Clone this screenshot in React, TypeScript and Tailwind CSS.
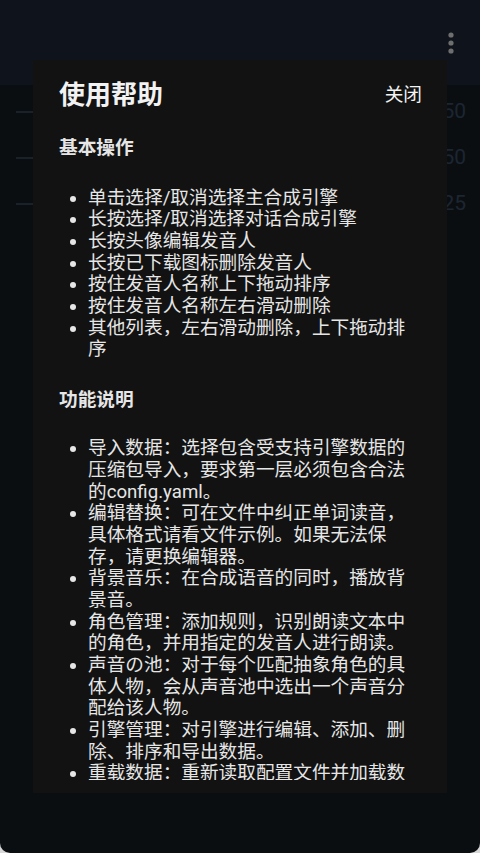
import React from "react";

const basicOps = [
  "单击选择/取消选择主合成引擎",
  "长按选择/取消选择对话合成引擎",
  "长按头像编辑发音人",
  "长按已下载图标删除发音人",
  "按住发音人名称上下拖动排序",
  "按住发音人名称左右滑动删除",
  "其他列表，左右滑动删除，上下拖动排序",
];

const features = [
  "导入数据：选择包含受支持引擎数据的压缩包导入，要求第一层必须包含合法的config.yaml。",
  "编辑替换：可在文件中纠正单词读音，具体格式请看文件示例。如果无法保存，请更换编辑器。",
  "背景音乐：在合成语音的同时，播放背景音。",
  "角色管理：添加规则，识别朗读文本中的角色，并用指定的发音人进行朗读。",
  "声音の池：对于每个匹配抽象角色的具体人物，会从声音池中选出一个声音分配给该人物。",
  "引擎管理：对引擎进行编辑、添加、删除、排序和导出数据。",
  "重载数据：重新读取配置文件并加载数据。",
];

const bgRows = ["150", "150", "125"];

const font = { fontFamily: 'Roboto, "Noto Sans CJK SC", sans-serif' };

const MoreIcon = () => (
  <svg width="6" height="22" viewBox="0 0 6 22" fill="#6e6e6e">
    <circle cx="3" cy="3" r="2.6" />
    <circle cx="3" cy="11" r="2.6" />
    <circle cx="3" cy="19" r="2.6" />
  </svg>
);

const BulletList = ({ items }: { items: string[] }) => (
  <ul className="list-disc pl-[29px] text-[18.67px] leading-[21.67px] text-[#e6e6e6]">
    {items.map((item, index) => (
      <li key={index}>{item}</li>
    ))}
  </ul>
);

export default function App() {
  return (
    <div className="h-[853px] w-[480px] bg-[#d8d8d8]" style={font}>
      <div className="relative h-full w-full overflow-hidden rounded-b-[10px] bg-[#0b0e11]">
        {/* app bar behind the dialog */}
        <div className="flex h-[85px] items-start justify-end bg-[#0f141c] pr-[26px] pt-[32px]">
          <MoreIcon />
        </div>

        {/* list rows behind the dialog */}
        <div className="flex flex-col pt-[4px]">
          {bgRows.map((value, index) => (
            <div key={index} className="flex h-[46px] items-center pl-[16px] pr-[14px]">
              <div className="h-[2px] flex-1 bg-[#19212b]" />
              <div className="ml-[6px] text-[21px] text-[#1c2632]">{value}</div>
            </div>
          ))}
        </div>

        {/* help dialog */}
        <div className="absolute left-[33px] top-[60px] flex h-[733px] w-[414px] flex-col bg-[#121212] pb-[13px] pl-[26px] pr-[25px] pt-[19px]">
          <div className="flex items-center justify-between">
            <h1 className="text-[26px] font-bold leading-[32px] text-[#f2f2f2]">使用帮助</h1>
            <button className="text-[18.67px] leading-[32px] text-[#f2f2f2]">关闭</button>
          </div>
          <div className="mt-[26.5px] flex-1 overflow-hidden">
            <h2 className="text-[18.67px] font-bold leading-[21.67px] text-[#e6e6e6]">基本操作</h2>
            <div className="mt-[28.5px]">
              <BulletList items={basicOps} />
            </div>
            <h2 className="mt-[29px] text-[18.67px] font-bold leading-[21.67px] text-[#e6e6e6]">功能说明</h2>
            <div className="mt-[26.5px]">
              <BulletList items={features} />
            </div>
          </div>
        </div>
      </div>
    </div>
  );
}
